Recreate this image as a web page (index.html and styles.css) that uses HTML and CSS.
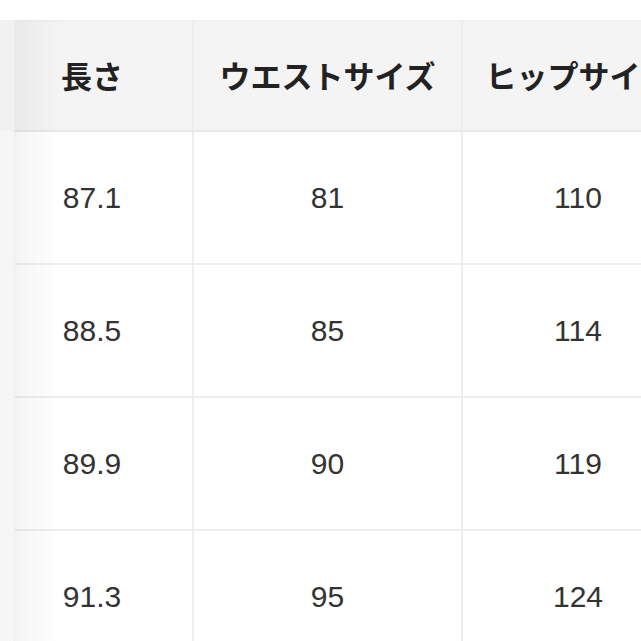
FILE: index.html
```html
<!DOCTYPE html>
<html lang="ja">
<head>
<meta charset="utf-8">
<link rel="stylesheet" href="styles.css">
</head>
<body>
<div class="wrap">
  <table class="size-table">
    <colgroup>
      <col class="c1"><col class="c2"><col class="c3"><col class="c4">
    </colgroup>
    <thead>
      <tr>
        <th>長さ</th><th>ウエストサイズ</th><th>ヒップサイズ</th><th>股下</th>
      </tr>
    </thead>
    <tbody>
      <tr><td>87.1</td><td>81</td><td>110</td><td>72</td></tr>
      <tr><td>88.5</td><td>85</td><td>114</td><td>72</td></tr>
      <tr><td>89.9</td><td>90</td><td>119</td><td>72</td></tr>
      <tr><td>91.3</td><td>95</td><td>124</td><td>72</td></tr>
    </tbody>
  </table>
  <div class="sticky-col">
    <div class="sticky-head"></div>
  </div>
</div>
</body>
</html>
```
FILE: styles.css
```css
html, body {
  margin: 0;
  padding: 0;
  background: #ffffff;
}
.wrap {
  position: relative;
  width: 641px;
  height: 641px;
  overflow: hidden;
  padding-top: 20px;
  box-sizing: border-box;
}
.size-table {
  border-collapse: collapse;
  table-layout: fixed;
  width: 960px;
  margin-left: -10px;
  font-family: "Liberation Sans", Arial, "Noto Sans CJK JP", sans-serif;
  color: #333333;
}
.c1 { width: 202px; }
.c2 { width: 269px; }
.c3 { width: 232px; }
.c4 { width: 257px; }
.size-table th,
.size-table td {
  border: 2px solid #eeeeee;
  text-align: center;
  vertical-align: middle;
  padding: 0;
}
.size-table th {
  height: 105px;
  padding-bottom: 3px;
  background: #f4f4f4;
  font-family: "Noto Sans CJK JP", sans-serif;
  font-weight: 700;
  font-size: 31px;
  color: #222222;
  white-space: nowrap;
  border-top-color: #f0f0f0;
  border-bottom-color: #e8e8e8;
}
.size-table td {
  height: 131px;
  font-size: 30px;
  font-weight: 400;
  color: #333333;
}
.sticky-col {
  position: absolute;
  left: 0;
  top: 20px;
  width: 14px;
  bottom: 0;
  background: #f6f6f6;
  border-right: 1px solid #ececec;
}
.sticky-head {
  height: 111px;
  background: #f1f1f1;
}
.sticky-col::after {
  content: "";
  position: absolute;
  top: 0;
  bottom: 0;
  left: 15px;
  width: 46px;
  background: linear-gradient(to right, rgba(0,0,0,0.045), rgba(0,0,0,0));
}
```
